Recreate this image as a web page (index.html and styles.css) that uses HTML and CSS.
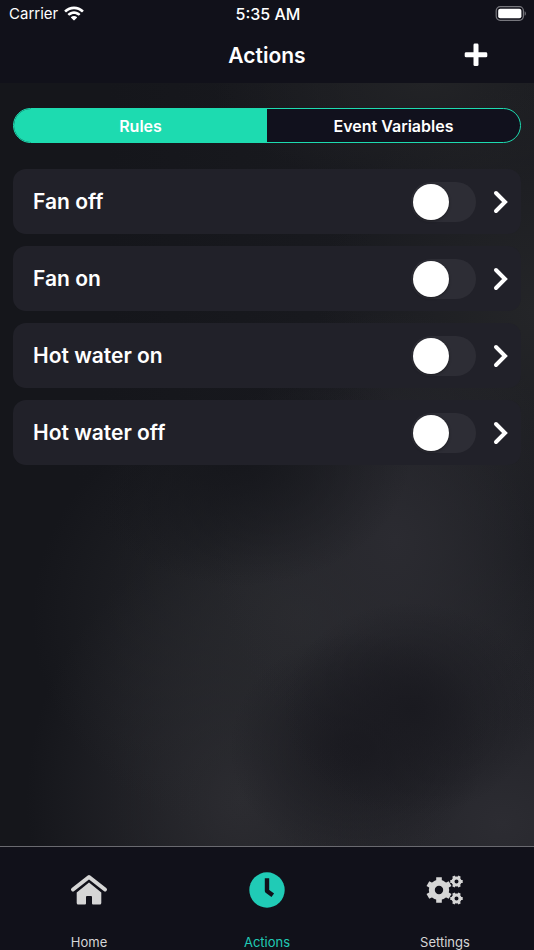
FILE: index.html
```
<!DOCTYPE html>
<html lang="en">
<head>
    <meta charset="UTF-8">
    <meta name="viewport" content="width=device-width, initial-scale=1.0">
    <title>Actions</title>
    <link rel="stylesheet" href="styles.css">
</head>
<body>
    <header class="header">
        <div class="status-bar">
            <div class="carrier">
                <span>Carrier</span>
                <svg width="20" height="15" viewBox="0 0 20 15" fill="#fff">
                    <path d="M10 .5c3.700 0 7 1.400 9.500 3.800.2.200.2.500 0 .7l-1.200 1.200c-.2.200-.5.200-.7 0C15.600 4.300 12.900 3.300 10 3.300S4.400 4.300 2.400 6.200c-.2.200-.5.200-.7 0L.5 5c-.2-.2-.2-.5 0-.7C3 1.900 6.300.5 10 .5z"/>
                    <path d="M10 5.300c2.400 0 4.500.9 6.200 2.400.2.200.2.500 0 .7L15 9.600c-.2.200-.5.200-.7 0C13.100 8.600 11.600 8 10 8s-3.100.6-4.300 1.600c-.2.200-.5.200-.7 0L3.800 8.400c-.2-.2-.2-.5 0-.7C5.500 6.200 7.600 5.300 10 5.300z"/>
                    <path d="M10 9.900c1.100 0 2.100.4 2.900 1.100.2.200.2.500 0 .7l-2.500 2.600c-.2.200-.6.200-.8 0l-2.500-2.600c-.2-.2-.2-.5 0-.7.8-.7 1.800-1.100 2.900-1.100z"/>
                </svg>
            </div>
            <div class="time">5:35 AM</div>
            <svg class="battery" width="32" height="15" viewBox="0 0 32 15">
                <rect x="1.200" y=".7" width="27.200" height="13.600" rx="4" fill="none" stroke="#77777d" stroke-width="1.200"/>
                <rect x="3.200" y="2.700" width="23.200" height="9.600" rx="2" fill="#fff"/>
                <path d="M29.600 5.200c1.700.7 1.700 3.900 0 4.600z" fill="#77777d"/>
            </svg>
        </div>
        <div class="title-bar">
            <h1>Actions</h1>
            <button class="add" type="button" aria-label="Add rule">
                <svg width="24" height="24" viewBox="0 0 24 24" fill="#fff">
                    <rect x="9.500" y=".5" width="5" height="22.600" rx="1.400"/>
                    <rect x=".7" y="9.300" width="22.600" height="5" rx="1.400"/>
                </svg>
            </button>
        </div>
    </header>

    <main class="content">
        <div class="segments">
            <button class="segment active" type="button">Rules</button>
            <button class="segment" type="button">Event Variables</button>
        </div>

        <ul class="rules">
            <li class="rule">
                <label for="fan-off">Fan off</label>
                <input type="checkbox" class="switch" id="fan-off">
                <button class="open" type="button" aria-label="Open Fan off">
                    <svg width="16" height="24" viewBox="0 0 16 24"><path d="M3 3l9 9-9 9"/></svg>
                </button>
            </li>
            <li class="rule">
                <label for="fan-on">Fan on</label>
                <input type="checkbox" class="switch" id="fan-on">
                <button class="open" type="button" aria-label="Open Fan on">
                    <svg width="16" height="24" viewBox="0 0 16 24"><path d="M3 3l9 9-9 9"/></svg>
                </button>
            </li>
            <li class="rule">
                <label for="water-on">Hot water on</label>
                <input type="checkbox" class="switch" id="water-on">
                <button class="open" type="button" aria-label="Open Hot water on">
                    <svg width="16" height="24" viewBox="0 0 16 24"><path d="M3 3l9 9-9 9"/></svg>
                </button>
            </li>
            <li class="rule">
                <label for="water-off">Hot water off</label>
                <input type="checkbox" class="switch" id="water-off">
                <button class="open" type="button" aria-label="Open Hot water off">
                    <svg width="16" height="24" viewBox="0 0 16 24"><path d="M3 3l9 9-9 9"/></svg>
                </button>
            </li>
        </ul>
    </main>

    <nav class="tab-bar">
        <a class="tab" href="#home">
            <svg width="38" height="38" viewBox="0 0 38 38">
                <path d="M3 18.500L19 6l16 12.500" fill="none" stroke="currentColor" stroke-width="4" stroke-linecap="round" stroke-linejoin="round"/>
                <path d="M19 11.500L31.300 21.500V32q0 1.500-1.500 1.500H23q-1 0-1-1V26q0-1-1-1H17q-1 0-1 1V32.500q0 1-1 1H8.200Q6.700 33.500 6.700 32V21.500z" fill="currentColor"/>
            </svg>
            <span>Home</span>
        </a>
        <a class="tab active" href="#actions">
            <svg width="38" height="38" viewBox="0 0 38 38">
                <circle cx="19" cy="19" r="17.700" fill="currentColor"/>
                <path d="M19 9.500V20l4 3" fill="none" stroke="#11111a" stroke-width="4.400" stroke-linecap="square" stroke-linejoin="round"/>
            </svg>
            <span>Actions</span>
        </a>
        <a class="tab" href="#settings">
            <svg width="38" height="38" viewBox="0 0 38 38" fill="none" stroke="currentColor">
                <circle cx="13" cy="19" r="7.200" stroke-width="6"/>
                <path d="M13 6.200v4.500M13 27.300v4.500M1.900 12.600l3.900 2.200M20.200 23.200l3.900 2.200M1.900 25.400l3.900-2.200M20.200 14.800l3.900-2.200" stroke-width="5.600"/>
                <circle cx="30.500" cy="10.500" r="3.500" stroke-width="3"/>
                <path d="M24.300 10.500h2.500M34.200 10.500h2.500M27.400 5.100l1.200 2.100M32.400 13.800l1.200 2.100M33.600 5.100l-1.200 2.100M28.600 13.800l-1.200 2.100" stroke-width="2.800"/>
                <circle cx="30.500" cy="27.500" r="3.500" stroke-width="3"/>
                <path d="M24.300 27.500h2.500M34.200 27.500h2.500M27.400 22.100l1.200 2.100M32.400 30.800l1.200 2.100M33.600 22.100l-1.200 2.100M28.600 30.800l-1.200 2.100" stroke-width="2.800"/>
            </svg>
            <span>Settings</span>
        </a>
    </nav>
</body>
</html>
```
FILE: styles.css
```
* {
    box-sizing: border-box;
}
body {
    display: flex;
    flex-direction: column;
    min-height: 100vh;
    margin: 0;
    font-family: Inter, Roboto, sans-serif;
    color: #fff;
    background-color: #11111a;
}
button {
    padding: 0;
    border: none;
    font-family: inherit;
    color: inherit;
    background: none;
    cursor: pointer;
}
svg {
    display: block;
}

/* Header */
.status-bar {
    display: grid;
    grid-template-columns: 1fr auto 1fr;
    align-items: center;
    height: 27px;
    padding: 0 7px 0 9px;
    font-size: 15px;
}
.carrier {
    display: flex;
    align-items: center;
    gap: 6px;
}
.time {
    font-size: 16px;
    font-weight: 500;
}
.battery {
    justify-self: end;
}
.title-bar {
    display: grid;
    grid-template-columns: 1fr auto 1fr;
    align-items: center;
    height: 56px;
}
.title-bar h1 {
    grid-column: 2;
    margin: 0;
    font-size: 21px;
    font-weight: 600;
}
.add {
    justify-self: end;
    margin-right: 46px;
}

/* Content */
.content {
    flex: 1;
    padding: 25px 13px;
    background:
        radial-gradient(ellipse 24% 14% at 77% 82%, #1a1a20, transparent),
        radial-gradient(ellipse 24% 15% at 67% 87%, #1a1a20, transparent),
        radial-gradient(ellipse 32% 17% at 45% 49%, #16171c, transparent),
        radial-gradient(ellipse 34% 30% at 74% 60%, #2b2b31, transparent),
        radial-gradient(ellipse 50% 30% at 56% 70%, #292a2e, transparent),
        radial-gradient(ellipse 40% 34% at 45% 94%, #2c2c31, transparent),
        radial-gradient(ellipse 56% 34% at 94% 97%, #2c2c32, transparent),
        radial-gradient(ellipse 40% 30% at 100% 30%, #242528, transparent),
        radial-gradient(ellipse 40% 14% at 80% 0%, #222326, transparent),
        linear-gradient(90deg, #15161b 20%, #191a1f 70%);
}
.segments {
    display: flex;
    height: 35px;
    overflow: hidden;
    border: 1px solid #1ddbb0;
    border-radius: 18px;
    background: #11111d;
}
.segment {
    flex: 1;
    font-size: 16px;
    font-weight: 600;
}
.segment.active {
    background: #1ddbb0;
}
.rules {
    display: flex;
    flex-direction: column;
    gap: 12px;
    margin: 26px 0 0;
    padding: 0;
    list-style: none;
}
.rule {
    display: flex;
    align-items: center;
    height: 65px;
    padding: 0 12px 0 20px;
    border-radius: 13px;
    background: #212129;
}
.rule label {
    flex: 1;
    font-size: 21px;
    font-weight: 600;
}
.switch {
    appearance: none;
    width: 65px;
    height: 40px;
    margin: 0 17px 0 0;
    padding: 2px;
    border-radius: 20px;
    background: #2d2d35;
    cursor: pointer;
}
.switch::before {
    content: "";
    display: block;
    width: 36px;
    height: 36px;
    border-radius: 50%;
    background: #fff;
    box-shadow: 0 1px 3px rgba(0, 0, 0, 0.4);
}
.switch:checked {
    background: #1ddbb0;
}
.switch:checked::before {
    margin-left: auto;
}
.open svg {
    fill: none;
    stroke: #fff;
    stroke-width: 4;
    stroke-linecap: round;
    stroke-linejoin: miter;
}

/* Tab bar */
.tab-bar {
    display: flex;
    height: 104px;
    border-top: 1px solid #6a6a70;
}
.tab {
    flex: 1;
    display: flex;
    flex-direction: column;
    align-items: center;
    justify-content: space-between;
    padding-top: 24px;
    font-size: 13px;
    line-height: 16px;
    color: #d6d6d6;
    text-decoration: none;
}
.tab.active {
    color: #20cbb6;
}
```
